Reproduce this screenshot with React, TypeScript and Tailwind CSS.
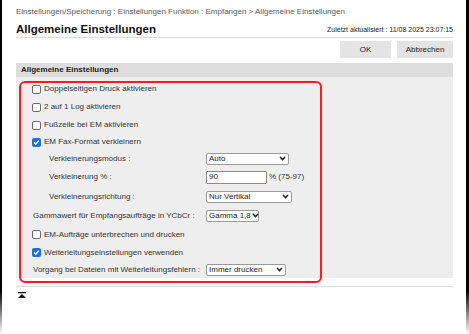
import type { ReactNode } from "react";

function Chevron() {
  return (
    <svg width="7" height="5" viewBox="0 0 7 5" className="shrink-0">
      <path d="M1 1 L3.5 3.6 L6 1" fill="none" stroke="#222" strokeWidth="1.5" />
    </svg>
  );
}

function Select({ value, w }: { value: string; w: string }) {
  return (
    <div className={`${w} h-[12px] bg-white border border-[#9a9a9a] rounded-[2px] flex items-center justify-between gap-[1px] pl-[2px] pr-[2px] text-[8px] leading-[10px] text-[#222] whitespace-nowrap`}>
      <span>{value}</span>
      <Chevron />
    </div>
  );
}

function Check({ checked, label }: { checked?: boolean; label: string }) {
  return (
    <div className="flex items-center pl-4 gap-[3px]">
      {checked ? (
        <div className="w-[9px] h-[9px] rounded-[2px] bg-[#1f6fd8] flex items-center justify-center">
          <svg width="7" height="7" viewBox="0 0 7 7">
            <path d="M1.2 3.6 L2.8 5.2 L5.8 1.6" fill="none" stroke="white" strokeWidth="1.4" />
          </svg>
        </div>
      ) : (
        <div className="w-[9px] h-[9px] rounded-[2px] border border-[#6a6a6a] bg-white" />
      )}
      <span>{label}</span>
    </div>
  );
}

function Field({ label, indent, children }: { label: string; indent?: boolean; children: ReactNode }) {
  return (
    <div className="flex items-center">
      <div className={indent ? "pl-[33px] w-[190px] whitespace-nowrap" : "pl-[17px] w-[190px] whitespace-nowrap"}>{label}</div>
      {children}
    </div>
  );
}

export default function App() {
  return (
    <div className="relative w-[469px] h-[334px] bg-white overflow-hidden font-['Liberation_Sans',Arial,sans-serif] text-[#333]">
      <div className="absolute left-0 top-0 w-[2px] h-full bg-[linear-gradient(to_bottom,#000_0%,#000_87%,rgba(0,0,0,0)_100%)]" />
      <div className="absolute right-0 top-0 w-[3px] h-full bg-[linear-gradient(to_bottom,#000_0%,#000_87%,rgba(0,0,0,0)_100%)]" />

      <div className="px-4">
        <div className="pt-[7px] text-[8px] leading-[10px] text-[#5a5a5a]">
          Einstellungen/Speicherung : Einstellungen Funktion : Empfangen &gt; Allgemeine Einstellungen
        </div>
        <div className="h-[21px] flex items-end justify-between border-b border-[#dadada]">
          <div className="pb-[1px] text-[11.5px] leading-[14px] font-bold text-[#111]">Allgemeine Einstellungen</div>
          <div className="pb-[2px] text-[7px] leading-[10px] text-[#222]">Zuletzt aktualisiert : 11/08 2025 23:07:15</div>
        </div>
        <div className="mt-[3px] flex justify-end gap-[6px] text-[8px] text-[#222]">
          <div className="w-[51px] h-[17px] bg-[#e4e4e4] flex items-center justify-center">OK</div>
          <div className="w-[56px] h-[17px] bg-[#e4e4e4] flex items-center justify-center">Abbrechen</div>
        </div>

        <div className="mt-[5px]">
          <div className="h-[14px] bg-[#dddddd] pl-[5px] flex items-center text-[8px] font-bold text-[#222]">
            Allgemeine Einstellungen
          </div>
          <div className="bg-[#eeeeee] pt-[3px] text-[8px] leading-[10px] text-[#333] flex flex-col">
            <div className="h-[18px] flex flex-col justify-center"><Check label="Doppelseitigen Druck aktivieren" /></div>
            <div className="h-[18px] flex flex-col justify-center"><Check label="2 auf 1 Log aktivieren" /></div>
            <div className="h-[18px] flex flex-col justify-center"><Check label="Fußzeile bei EM aktivieren" /></div>
            <div className="h-[16px] flex flex-col justify-center"><Check checked label="EM Fax-Format verkleinern" /></div>
            <div className="h-[17px] flex flex-col justify-center">
              <Field indent label="Verkleinerungsmodus :"><Select value="Auto" w="w-[83px]" /></Field>
            </div>
            <div className="h-[20px] flex flex-col justify-center">
              <Field indent label="Verkleinerung % :">
                <div className="w-[61px] h-[13px] bg-white border border-[#8a8a8a] rounded-[1px] pl-[2px] flex items-center text-[#222]">90</div>
                <span className="ml-[2px]">% (75-97)</span>
              </Field>
            </div>
            <div className="h-[19px] flex flex-col justify-center">
              <Field indent label="Verkleinerungsrichtung :"><Select value="Nur Vertikal" w="w-[86px]" /></Field>
            </div>
            <div className="h-[19px] flex flex-col justify-center">
              <Field label="Gammawert für Empfangsaufträge in YCbCr :"><Select value="Gamma 1,8" w="w-[53px]" /></Field>
            </div>
            <div className="h-[19px] flex flex-col justify-center"><Check label="EM-Aufträge unterbrechen und drucken" /></div>
            <div className="h-[17px] flex flex-col justify-center"><Check checked label="Weiterleitungseinstellungen verwenden" /></div>
            <div className="h-[17px] flex flex-col justify-center">
              <Field label="Vorgang bei Dateien mit Weiterleitungsfehlern :"><Select value="Immer drucken" w="w-[80px]" /></Field>
            </div>
          </div>
        </div>

        <div className="mt-[8px] border-t border-[#dddddd] pt-[5px] pl-[2px]">
          <svg width="8" height="6" viewBox="0 0 8 6">
            <rect x="0" y="0" width="8" height="1.3" fill="#111" />
            <path d="M0 6 L4 2 L8 6 Z" fill="#111" />
          </svg>
        </div>
      </div>

      <div className="absolute left-[19px] top-[81px] w-[303px] h-[202px] border-2 border-[#ff1c1c] rounded-[6px]" />
    </div>
  );
}
